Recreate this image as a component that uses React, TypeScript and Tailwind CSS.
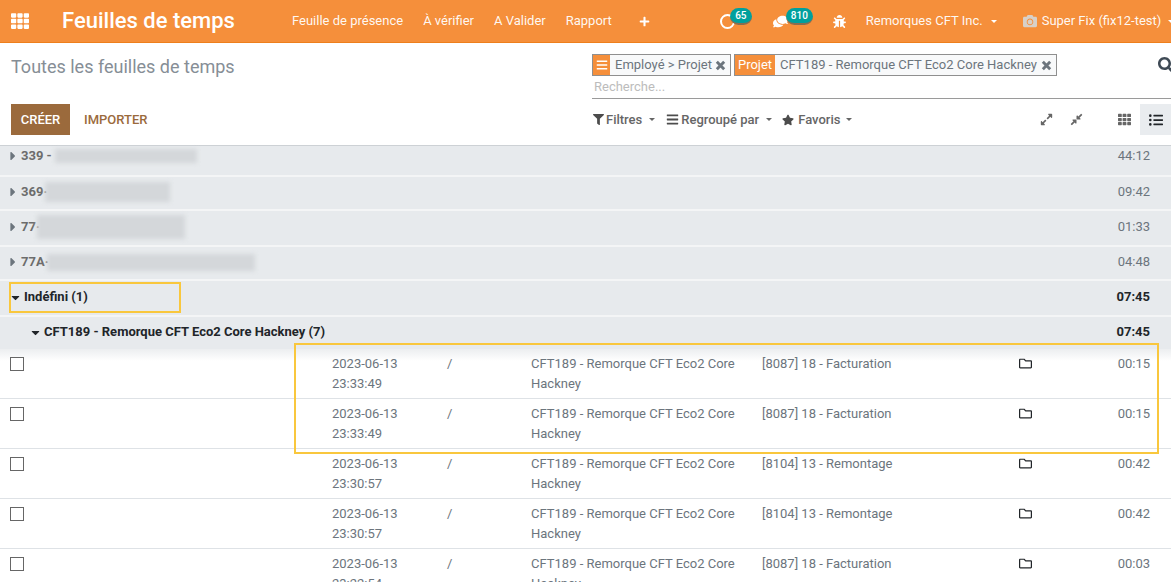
import React from "react";
import { FaTh, FaPlus, FaBug, FaFilter, FaBars, FaStar, FaExpandAlt, FaCompressAlt, FaListUl, FaRegFolder, FaSearch, FaComments, FaCamera, FaCaretRight, FaCaretDown } from "react-icons/fa";

const Caret = ({ className = "" }: { className?: string }) => (
  <span className={`inline-block w-0 h-0 shrink-0 border-x-[3px] border-x-transparent border-t-[3px] ${className}`} />
);

const Close = () => (
  <svg viewBox="0 0 12 12" className="w-[11px] h-[11px] mt-[5px] mr-[4px] ml-[1px] shrink-0 text-[#6c757d]">
    <path d="M2 2 L10 10 M10 2 L2 10" stroke="currentColor" strokeWidth="3.2" strokeLinecap="butt" fill="none" />
  </svg>
);

const NavLink = ({ children }: { children: React.ReactNode }) => (
  <span className="text-[13px] text-white/95 whitespace-nowrap">{children}</span>
);

const Group = ({ label, blur, blurH, time, h, gap = 0, lift = "pb-[2px]" }: { label: string; blur: number; blurH: number; time: string; h: string; gap?: number; lift?: string }) => (
  <div className={`${h} ${lift} flex items-center bg-[#e7eaed] border-b-2 border-b-[#f4f5f6] pl-[10px] pr-[21px]`}>
    <FaCaretRight className="text-[#6c757d] text-[14px] w-[6px] shrink-0" />
    <span className="ml-[5px] text-[13px] font-bold text-[#6c6c6c] whitespace-nowrap">{label}</span>
    <div className="bg-[#d4d7da] blur-[2px] shrink-0" style={{ width: blur, height: blurH, marginLeft: gap }} />
    <span className="ml-auto text-[13px] text-[#6c757d]">{time}</span>
  </div>
);

const rows = [
  ["2023-06-13", "23:33:49", "[8087] 18 - Facturation", "00:15"],
  ["2023-06-13", "23:33:49", "[8087] 18 - Facturation", "00:15"],
  ["2023-06-13", "23:30:57", "[8104] 13 - Remontage", "00:42"],
  ["2023-06-13", "23:30:57", "[8104] 13 - Remontage", "00:42"],
  ["2023-06-13", "23:22:54", "[8087] 18 - Facturation", "00:03"],
];

export default function App() {
  return (
    <div className="relative h-[582px] w-[1171px] overflow-hidden bg-white font-['Roboto',sans-serif] text-[13px] text-[#6c757d]">
      <header className="h-[43px] bg-[#f58f3b] border-b border-b-[#ee7f1c] flex items-center text-white">
        <FaTh className="ml-[11px] text-[18px] w-[18px] shrink-0" />
        <span className="ml-[33px] text-[22px] font-medium leading-none w-[230px] shrink-0 whitespace-nowrap">Feuilles de temps</span>
        <div className="flex items-center shrink-0">
          <NavLink>Feuille de présence</NavLink>
          <span className="ml-[20px]"><NavLink>À vérifier</NavLink></span>
          <span className="ml-[20px]"><NavLink>A Valider</NavLink></span>
          <span className="ml-[20px]"><NavLink>Rapport</NavLink></span>
          <FaPlus className="ml-[27px] text-[11px]" />
        </div>
        <div className="relative ml-[70px] w-[15px] h-[15px] shrink-0 rounded-full border-2 border-white">
          <span className="absolute left-[8px] -top-[8px] h-[17px] w-[22px] text-center rounded-full bg-[#00a09d] text-[10px] font-medium leading-[15px] text-white border-b-2 border-[#8a6d50]">65</span>
        </div>
        <div className="relative ml-[38px] w-[16px] shrink-0">
          <FaComments className="text-[15px] -scale-x-100" />
          <span className="absolute left-[13px] -top-[6px] h-[17px] w-[27px] text-center rounded-full bg-[#00a09d] text-[10px] font-medium leading-[15px] text-white border-b-2 border-[#8a6d50]">810</span>
        </div>
        <FaBug className="ml-[44px] text-[13px] shrink-0" />
        <span className="ml-[20px] shrink-0"><NavLink>Remorques CFT Inc.</NavLink></span>
        <Caret className="ml-[8px] border-t-white" />
        <FaCamera className="ml-[26px] text-[14px] text-[#d8d0c8] shrink-0" />
        <span className="ml-[5px] shrink-0"><NavLink>Super Fix (fix12-test)</NavLink></span>
        <Caret className="ml-[7px] border-t-white" />
      </header>

      <section className="h-[103px] border-b border-b-[#cdd1d5] flex">
        <div className="w-[592px] pl-[11px] shrink-0">
          <div className="mt-[12px] text-[18px] leading-[24px] text-[#868e96] whitespace-nowrap">Toutes les feuilles de temps</div>
          <div className="mt-[25px] flex items-center">
            <button className="h-[31px] w-[59px] pt-px bg-[#9b6a3c] text-white text-[13px] font-medium">CRÉER</button>
            <span className="ml-[14px] pt-px text-[13px] font-medium text-[#9b6a3c]">IMPORTER</span>
          </div>
        </div>
        <div className="flex-1 min-w-0">
          <div className="mt-[11px] relative flex items-center gap-[3px]">
            <div className="h-[22px] flex border border-[#8f8f8f] bg-[#f8f9fa]">
              <span className="w-[17px] bg-[#f58f3b] flex items-center justify-center text-white"><FaBars className="text-[12px]" /></span>
              <span className="pl-[5px] pr-[2px] leading-[20px] whitespace-nowrap">Employé &gt; Projet</span>
              <Close />
            </div>
            <div className="h-[22px] flex border border-[#8f8f8f] bg-[#f8f9fa]">
              <span className="px-[3px] bg-[#f58f3b] text-white leading-[20px]">Projet</span>
              <span className="pl-[5px] pr-[3px] leading-[20px] whitespace-nowrap">CFT189 - Remorque CFT Eco2 Core Hackney</span>
              <Close />
            </div>
            <FaSearch className="absolute left-[566px] top-[3px] text-[16px] text-[#3f4a55]" />
          </div>
          <div className="h-[23px] border-b border-b-[#9a9a9a] pl-[2px] pt-[1px] leading-[20px] text-[#bcbcbc]">Recherche...</div>
          <div className="mt-[5px] h-[31px] flex items-center relative text-[#4c4c4c]">
            <FaFilter className="text-[11px] ml-[1px]" />
            <span className="ml-[2px] font-medium text-[#666]">Filtres</span>
            <Caret className="ml-[7px] border-t-[#666]" />
            <FaBars className="ml-[11px] text-[13px]" />
            <span className="ml-[2px] font-medium text-[#666]">Regroupé par</span>
            <Caret className="ml-[7px] border-t-[#666]" />
            <FaStar className="ml-[10px] text-[12px]" />
            <span className="ml-[4px] font-medium text-[#666]">Favoris</span>
            <Caret className="ml-[6px] border-t-[#666]" />
            <FaExpandAlt className="absolute left-[448px] top-[9px] text-[13px] text-[#666]" />
            <FaCompressAlt className="absolute left-[478px] top-[9px] text-[13px] text-[#666]" />
            <FaTh className="absolute left-[526px] top-[9px] text-[13px] text-[#666]" />
            <div className="absolute left-[548px] top-0 w-[31px] h-[31px] bg-[#e9ecef] flex items-center justify-center">
              <FaListUl className="text-[14px] text-[#212529]" />
            </div>
          </div>
        </div>
      </section>

      <Group label="339 - " blur={142} blurH={14} gap={3} time="44:12" h="h-[31px]" lift="pb-[10px]" />
      <Group label="369·" blur={125} blurH={20} gap={-2} time="09:42" h="h-[34px]" />
      <Group label="77·" blur={148} blurH={24} gap={-3} time="01:33" h="h-[36px]" />
      <Group label="77A·" blur={208} blurH={17} gap={-2} time="04:48" h="h-[34px]" />

      <div className="h-[36px] pb-[2px] flex items-center bg-[#e7eaed] border-b-2 border-b-[#f4f5f6] pl-[11px] pr-[21px] text-[#212529] font-bold">
        <FaCaretDown className="text-[13px] w-[9px]" />
        <span className="ml-[4px] text-[13px]">Indéfini (1)</span>
        <span className="ml-auto">07:45</span>
      </div>
      <div className="h-[33px] pb-[2px] flex items-center bg-[#e7eaed] border-b border-b-[#d8dbe0] pl-[31px] pr-[21px] text-[#212529] font-bold">
        <FaCaretDown className="text-[13px] w-[9px]" />
        <span className="ml-[4px] text-[13px]">CFT189 - Remorque CFT Eco2 Core Hackney (7)</span>
        <span className="ml-auto">07:45</span>
      </div>

      {rows.map((r, i) => (
        <div key={i} className={`h-[50px] grid grid-cols-[332px_115px_84px_231px_257px_1fr] border-b border-b-[#dee2e6] pt-[5px] leading-[20px] ${i === 0 ? "-mt-px bg-[linear-gradient(#eceef0,#ffffff_12px)]" : ""}`}>
          <div className="pl-[10px] pt-[3px]"><div className="w-[14px] h-[14px] border border-[#666] bg-white" /></div>
          <div>{r[0]}<br />{r[1]}</div>
          <div>/</div>
          <div className="pr-[4px]">CFT189 - Remorque CFT Eco2 Core Hackney</div>
          <div>{r[2]}</div>
          <div className="flex justify-between pr-[21px]">
            <FaRegFolder className="mt-[3px] text-[13px] text-[#212529]" />
            <span>{r[3]}</span>
          </div>
        </div>
      ))}

      <div className="absolute left-[294px] top-[343px] w-[865px] h-[111px] border-2 border-[#f9c73d]" />
      <div className="absolute left-[9px] top-[282px] w-[172px] h-[31px] border-2 border-[#f9c73d]" />
    </div>
  );
}
